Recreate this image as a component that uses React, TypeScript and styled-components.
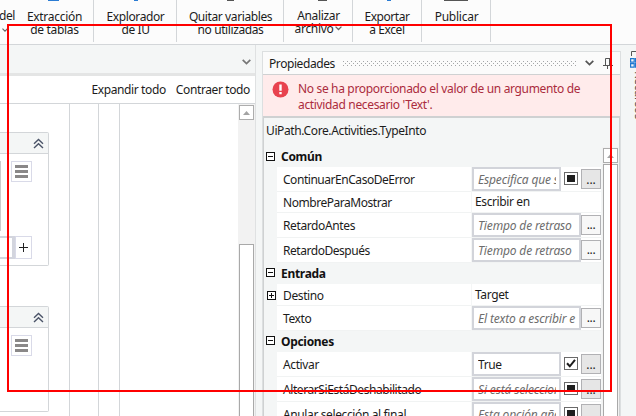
import React from 'react';
import styled, { createGlobalStyle, css } from 'styled-components';

const line = '#d3d6d9';

const GlobalStyle = createGlobalStyle`
  *, *::before, *::after { box-sizing: border-box; }
  html, body { margin: 0; height: 100%; overflow: hidden; }
  body {
    font: 12px/16px "Noto Sans", "Open Sans", sans-serif;
    letter-spacing: -0.38px;
    color: #1c1c1c;
    background: #f4f6f6;
  }
`;

const Window = styled.div`
  position: relative;
  display: flex;
  flex-direction: column;
  width: 636px;
  height: 416px;
  overflow: hidden;
  background: #f4f6f6;
`;

/* Ribbon */
const Ribbon = styled.header`
  display: flex;
  flex: none;
  height: 45px;
  background: #fcfcfc;
  border-bottom: 1px solid ${line};
`;

const RibbonGroup = styled.div<{ $width: number }>`
  display: flex;
  flex: none;
  justify-content: center;
  width: ${p => p.$width}px;
  height: 42px;
  border-right: 1px solid ${line};
  overflow: hidden;
`;

const RibbonButton = styled.div<{ $raise?: number; $shift?: number; $track?: number }>`
  display: flex;
  flex-direction: column;
  align-items: center;
  flex: none;
  padding-left: ${p => p.$shift ?? 0}px;
  line-height: 13px;
  white-space: nowrap;
  letter-spacing: ${p => p.$track ?? -0.35}px;

  > svg { flex: none; display: block; margin-bottom: ${p => 8 - (p.$raise ?? 0)}px; }
`;

const RibbonLine = styled.span`
  display: flex;
  align-items: center;
  gap: 2px;
  height: 13px;
`;

const CutButton = styled.div`
  display: flex;
  flex-direction: column;
  flex: none;
  align-items: flex-end;
  width: 15px;
  margin-right: auto;
  padding-top: 9px;
  line-height: 13px;

  svg { margin: 6px 7px 0 0; }
`;

const Main = styled.div`
  display: flex;
  flex: 1;
  min-height: 0;
`;

/* Workflow designer */
const Designer = styled.section`
  display: flex;
  flex-direction: column;
  flex: none;
  width: 256px;
  border-right: 1px solid #dfe1e2;
`;

const TabStrip = styled.div`
  display: flex;
  flex: none;
  align-items: center;
  justify-content: flex-end;
  height: 31px;
  padding: 6px 4px 0 0;
  border-bottom: 3px solid #e4e5e5;
`;

const DesignerBar = styled.div`
  display: flex;
  flex: none;
  align-items: center;
  justify-content: flex-end;
  gap: 10px;
  height: 28px;
  padding: 0 5px 0 0;
  background: #fff;
  border-bottom: 1px solid ${line};
`;

const Canvas = styled.div`
  display: flex;
  flex: 1;
  min-height: 0;
  background: #fff;
`;

const Cards = styled.div`
  display: flex;
  flex-direction: column;
  flex: none;
  gap: 40px;
  width: 70px;
  padding-top: 28px;
  border-right: 1px solid ${line};
`;

const Lane = styled.div<{ $width: number }>`
  flex: none;
  width: ${p => p.$width}px;
  border-right: 1px solid ${line};
`;

const Card = styled.article<{ $height: number }>`
  display: flex;
  flex-direction: column;
  flex: none;
  width: 49px;
  height: ${p => p.$height}px;
  border: solid ${line};
  border-width: 1px 1px 1px 0;
  border-radius: 0 2px 2px 0;
`;

const CardHeader = styled.div`
  display: flex;
  flex: none;
  align-items: center;
  justify-content: flex-end;
  height: 21px;
  padding-right: 4px;
  background: #f4f6f6;
  border-bottom: 1px solid ${line};
`;

const CardBody = styled.div`
  display: flex;
  flex: none;
  height: 70px;
  margin-top: 7px;
`;

const Preview = styled.div`
  width: 11px;
  border-left: 1px solid #c9cbcd;
`;

const Spacer = styled.div`
  width: 11px;
`;

const SquareButton = styled.div<{ $w: number; $h: number }>`
  display: flex;
  flex: none;
  align-items: center;
  justify-content: center;
  width: ${p => p.$w}px;
  height: ${p => p.$h}px;
  border: 1px solid #d9dae8;
  background: #fff;
`;

const ArgumentRow = styled.div`
  display: flex;
  flex: none;
  height: 23px;
  margin-top: 5px;
`;

const ArgumentInput = styled.div`
  width: 15px;
  border: solid #d3d5de;
  border-width: 2px 3px 2px 0;
  background: #fff;
`;

/* Scroll bars */
const ScrollTrack = styled.div`
  display: flex;
  flex-direction: column;
  flex: none;
  align-items: center;
  width: 17px;
  margin-left: auto;
  background: #f2f2f2;
`;

const ScrollButton = styled.div`
  display: flex;
  flex: none;
  align-items: center;
  justify-content: center;
  width: 15px;
  height: 15px;
  margin-top: 1px;
  border: 1px solid #adadad;
  background: #fff;
`;

const ScrollThumb = styled.div<{ $gap: number }>`
  flex: 1;
  width: 15px;
  margin-top: ${p => p.$gap}px;
  border: 1px solid #a9a9a9;
  border-bottom: 0;
  background: #fff;
`;

/* Properties panel */
const Panel = styled.section`
  display: flex;
  flex-direction: column;
  flex: none;
  width: 359px;
  margin: 6px 0 0 6px;
  border: solid #dcdfe0;
  border-width: 1px 1px 0 1px;
`;

const PanelTitle = styled.div`
  display: flex;
  flex: none;
  align-items: center;
  height: 23px;
  padding: 1px 0 0 6px;
  background: #fbfbfb;
  border-bottom: 1px solid #cfd1d2;
`;

const PanelName = styled.span`
  width: 66px;
  letter-spacing: -0.42px;
`;

const Grip = styled.div`
  display: flex;
  flex: none;
  width: 234px;
  margin-left: 8px;
`;

const Pin = styled.div<{ $gap: number }>`
  display: flex;
  flex: none;
  margin-left: ${p => p.$gap}px;
`;

const ErrorBar = styled.div`
  display: flex;
  flex: none;
  gap: 9px;
  height: 41px;
  padding: 6px 0 0 9px;
  background: #ffebeb;
  color: #ab2b3d;
  white-space: nowrap;
`;

const ErrorText = styled.div`
  letter-spacing: -0.34px;
`;

const PanelBody = styled.div`
  display: flex;
  flex-direction: column;
  flex: 1;
  min-height: 0;
  border: solid #cfd1d2;
  border-width: 2px 1px 0 1px;
  background: #f4f6f6;
`;

const TypeName = styled.div`
  flex: none;
  height: 29px;
  padding: 5px 0 0 2px;
  letter-spacing: -0.38px;
`;

const GridArea = styled.div`
  display: flex;
  flex: 1;
  min-height: 0;
`;

const Rows = styled.div`
  flex: none;
  width: 337px;
`;

const Category = styled.div<{ $h: number }>`
  display: flex;
  align-items: center;
  gap: 6px;
  height: ${p => p.$h}px;
  padding-left: 2px;
  font-weight: 700;
  color: #111;
  letter-spacing: -0.3px;

  > svg { margin-top: -2px; }
`;

const Row = styled.div<{ $h: number }>`
  display: flex;
  height: ${p => p.$h}px;
`;

const Expander = styled.div`
  display: flex;
  flex: none;
  align-items: center;
  width: 13px;
  padding-left: 3px;
`;

const NameCell = styled.div<{ $track?: number }>`
  display: flex;
  align-items: center;
  flex: none;
  width: 194px;
  padding: 2px 0 0 6px;
  background: #fff;
  border-bottom: 1px solid #f1f3f3;
  letter-spacing: ${p => p.$track ?? -0.38}px;
`;

const ValueCell = styled.div<{ $plain?: boolean }>`
  display: flex;
  align-items: center;
  flex: none;
  width: 129px;
  margin-left: 1px;
  background: #fff;
  border-bottom: 1px solid #f1f3f3;
  ${p => p.$plain && css`padding: 0 0 0 3px;`}
`;

const Field = styled.div<{ $hint?: boolean; $narrow?: boolean }>`
  flex: none;
  align-self: flex-start;
  width: ${p => (p.$narrow ? 89 : 109)}px;
  height: 24px;
  padding: 3px 3px 0 4px;
  border: 2px solid #d2d4da;
  background: #fff;
  overflow: hidden;
  white-space: nowrap;
  ${p => p.$hint && css`
    color: #6d6d6d;
    font-style: italic;
    letter-spacing: -0.15px;
  `}
`;

const FieldText = styled.div`
  overflow: hidden;
`;

const Check = styled.div`
  display: flex;
  flex: none;
  margin: -1px 3px 0;
`;

const MoreButton = styled.div<{ $grey?: boolean }>`
  flex: none;
  align-self: flex-start;
  width: 20px;
  height: 20px;
  margin-top: 2px;
  border: 1px solid #b1b1b4;
  background: ${p => (p.$grey ? '#e6e6e6' : '#f7f7f7')};
  line-height: ${p => (p.$grey ? 19 : 17)}px;
  letter-spacing: ${p => (p.$grey ? 0 : -0.4)}px;
  text-align: center;
`;

/* Docked side tab */
const SideTab = styled.aside`
  display: flex;
  flex-direction: column;
  flex: none;
  width: 30px;
  margin-left: 9px;
  padding-top: 6px;
  color: #4a4a4a;

  > svg { flex: none; display: block; }
`;

const SideTabText = styled.span`
  writing-mode: vertical-rl;
  width: 16px;
  margin: 3px 0 0 1px;
`;

const Highlight = styled.div`
  position: absolute;
  left: 7px;
  top: 24px;
  width: 605px;
  height: 368px;
  border: 2px solid #ff0000;
  pointer-events: none;
`;

const Chevron = ({ size = 9, color = '#666' }: { size?: number; color?: string }) => (
  <svg width={size} height={size * 0.67} viewBox="0 0 9 6" fill="none" stroke={color} strokeWidth="1.7">
    <path d="M.7 .8l3.8 3.8L8.3 .8" />
  </svg>
);

const DoubleUp = () => (
  <svg width="11" height="11" viewBox="0 0 11 11" fill="none" stroke="#4b5468" strokeWidth="1.4">
    <path d="M1 5.7L5.5 1.4 10 5.7M1 10L5.5 5.7 10 10" />
  </svg>
);

const Bars = () => (
  <svg width="13" height="13" viewBox="0 0 13 13" fill="#8a8888">
    <path d="M0 0h13v3H0zM0 5h13v3H0zM0 10h13v3H0z" />
  </svg>
);

const Toggle = ({ plus = false }: { plus?: boolean }) => (
  <svg width="9" height="9" viewBox="0 0 9 9" fill="none" stroke="#111">
    <rect x=".5" y=".5" width="8" height="8" fill="#fff" />
    <path d={plus ? 'M2 4.5h5M4.5 2v5' : 'M2 4.5h5'} />
  </svg>
);

const CheckBox = ({ checked }: { checked?: boolean }) => (
  <svg width="14" height="13" viewBox="0 0 14 13" fill="none">
    <rect x=".5" y=".5" width="13" height="12" fill="#fff" stroke="#6a6a6a" />
    {checked
      ? <path d="M3 6.3l2.8 3L11 2.8" stroke="#1c1c1c" strokeWidth="2" />
      : <rect x="3" y="3" width="8" height="7" fill="#1f1f1f" />}
  </svg>
);

const UpArrow = () => (
  <svg width="7" height="4" viewBox="0 0 7 4" fill="#a3a3a3"><path d="M0 4L3.5 0 7 4z" /></svg>
);

const IconEdge = ({ d, color }: { d: string; color: string }) => (
  <svg width="24" height="2" viewBox="0 0 24 2" fill={color}><path d={d} /></svg>
);

type Prop = {
  name: string;
  value: string;
  h: number;
  track?: number;
  plain?: boolean;
  hint?: boolean;
  check?: 'on' | 'mixed';
  plus?: boolean;
};

const groups: { title: string; h: number; rows: Prop[] }[] = [
  {
    title: 'Común', h: 20, rows: [
      { name: 'ContinuarEnCasoDeError', value: 'Especifica que se', h: 25, hint: true, check: 'mixed', track: -0.46 },
      { name: 'NombreParaMostrar', value: 'Escribir en', h: 21, plain: true, track: -0.46 },
      { name: 'RetardoAntes', value: 'Tiempo de retraso', h: 25, hint: true },
      { name: 'RetardoDespués', value: 'Tiempo de retraso', h: 25, hint: true, track: -0.46 },
    ],
  },
  {
    title: 'Entrada', h: 21, rows: [
      { name: 'Destino', value: 'Target', h: 22, plain: true, plus: true },
      { name: 'Texto', value: 'El texto a escribir e', h: 25, hint: true },
    ],
  },
  {
    title: 'Opciones', h: 21, rows: [
      { name: 'Activar', value: 'True', h: 25, check: 'on' },
      { name: 'AlterarSiEstáDeshabilitado', value: 'Si está selecciona', h: 25, hint: true, check: 'mixed', track: -0.42 },
      { name: 'Anular selección al final', value: 'Esta opción aña', h: 25, hint: true, check: 'mixed' },
    ],
  },
];

const PropertyRow = ({ p }: { p: Prop }) => (
  <Row $h={p.h}>
    <Expander>{p.plus && <Toggle plus />}</Expander>
    <NameCell $track={p.track}>{p.name}</NameCell>
    <ValueCell $plain={p.plain}>
      {p.plain ? p.value : (
        <>
          <Field $hint={p.hint} $narrow={!!p.check}><FieldText>{p.value}</FieldText></Field>
          {p.check && <Check><CheckBox checked={p.check === 'on'} /></Check>}
          <MoreButton $grey={!!p.check}>...</MoreButton>
        </>
      )}
    </ValueCell>
  </Row>
);

export default function App() {
  return (
    <>
      <GlobalStyle />
      <Window>
        <Ribbon>
          <RibbonGroup $width={94}>
            <CutButton>
              <span>del</span>
              <Chevron size={6} />
            </CutButton>
            <RibbonButton $track={-0.3}>
              <IconEdge d="M6 0h11v1H6z" color="#2b7cd3" />
              <RibbonLine>Extracción</RibbonLine>
              <RibbonLine>de tablas</RibbonLine>
            </RibbonButton>
            <Spacer />
          </RibbonGroup>
          <RibbonGroup $width={83}>
            <RibbonButton $track={-0.4} $shift={1}>
              <IconEdge d="M10 0h4v1h-4z" color="#2b7cd3" />
              <RibbonLine>Explorador</RibbonLine>
              <RibbonLine>de IU</RibbonLine>
            </RibbonButton>
          </RibbonGroup>
          <RibbonGroup $width={107}>
            <RibbonButton $track={-0.4} $shift={1}>
              <IconEdge d="M9 0h7v1H9z" color="#555" />
              <RibbonLine>Quitar variables</RibbonLine>
              <RibbonLine>no utilizadas</RibbonLine>
            </RibbonButton>
          </RibbonGroup>
          <RibbonGroup $width={69}>
            <RibbonButton $raise={1} $track={-0.33} $shift={1}>
              <IconEdge d="M11 0h9v1h-9z" color="#555" />
              <RibbonLine>Analizar</RibbonLine>
              <RibbonLine>archivo<Chevron size={7} /></RibbonLine>
            </RibbonButton>
          </RibbonGroup>
          <RibbonGroup $width={69}>
            <RibbonButton $track={-0.43}>
              <IconEdge d="M12 0h4v1h-4z" color="#2b7cd3" />
              <RibbonLine>Exportar</RibbonLine>
              <RibbonLine>a Excel</RibbonLine>
            </RibbonButton>
          </RibbonGroup>
          <RibbonGroup $width={69}>
            <RibbonButton $track={-0.25} $shift={1}>
              <IconEdge d="M0 0h24v1H0z" color="#555" />
              <RibbonLine>Publicar</RibbonLine>
            </RibbonButton>
          </RibbonGroup>
        </Ribbon>

        <Main>
          <Designer>
            <TabStrip><Chevron size={9} color="#777" /></TabStrip>
            <DesignerBar>
              <span>Expandir todo</span>
              <span>Contraer todo</span>
            </DesignerBar>
            <Canvas>
              <Cards>
                <Card $height={134}>
                  <CardHeader><DoubleUp /></CardHeader>
                  <CardBody>
                    <Preview />
                    <SquareButton $w={21} $h={21}><Bars /></SquareButton>
                  </CardBody>
                  <ArgumentRow>
                    <ArgumentInput />
                    <SquareButton $w={17} $h={23}>
                      <svg width="9" height="9" viewBox="0 0 9 9" stroke="#222"><path d="M0 4.5h9M4.5 0v9" /></svg>
                    </SquareButton>
                  </ArgumentRow>
                </Card>
                <Card $height={106}>
                  <CardHeader><DoubleUp /></CardHeader>
                  <CardBody>
                    <Spacer />
                    <SquareButton $w={21} $h={21}><Bars /></SquareButton>
                  </CardBody>
                </Card>
              </Cards>
              <Lane $width={29} />
              <Lane $width={21} />
              <ScrollTrack>
                <ScrollButton><UpArrow /></ScrollButton>
                <ScrollThumb $gap={124} />
              </ScrollTrack>
            </Canvas>
          </Designer>

          <Panel>
            <PanelTitle>
              <PanelName>Propiedades</PanelName>
              <Grip>
                <svg width="234" height="5">
                  <defs>
                    <pattern id="dots" width="4" height="4" patternUnits="userSpaceOnUse">
                      <path d="M0 0h1v1H0zM2 2h1v1H2z" fill="#a4a6a8" />
                    </pattern>
                  </defs>
                  <rect width="234" height="5" fill="url(#dots)" />
                </svg>
              </Grip>
              <Pin $gap={8}><Chevron size={9} color="#555" /></Pin>
              <Pin $gap={9}>
                <svg width="10" height="11" viewBox="0 0 10 11" fill="none" stroke="#555">
                  <path d="M2.5 7V.5h5V7M6.5 1v6M0 7.5h10M4.5 8v3" />
                </svg>
              </Pin>
            </PanelTitle>
            <ErrorBar>
              <svg width="17" height="17" viewBox="0 0 17 17">
                <circle cx="8.5" cy="8.5" r="8" fill="#e8434f" />
                <path d="M7.3 3.5h2.4v6.2H7.3zM7.3 11h2.4v2.2H7.3z" fill="#fff" />
              </svg>
              <ErrorText>
                No se ha proporcionado el valor de un argumento de<br />
                actividad necesario 'Text'.
              </ErrorText>
            </ErrorBar>
            <PanelBody>
              <TypeName>UiPath.Core.Activities.TypeInto</TypeName>
              <GridArea>
                <Rows>
                  {groups.map(g => (
                    <React.Fragment key={g.title}>
                      <Category $h={g.h}><Toggle />{g.title}</Category>
                      {g.rows.map(p => <PropertyRow key={p.name} p={p} />)}
                    </React.Fragment>
                  ))}
                </Rows>
                <ScrollTrack>
                  <ScrollButton><UpArrow /></ScrollButton>
                  <ScrollThumb $gap={1} />
                </ScrollTrack>
              </GridArea>
            </PanelBody>
          </Panel>

          <SideTab>
            <svg width="20" height="17" viewBox="0 0 20 17" fill="none">
              <path d="M1.5 5V.5H20" stroke="#555" />
              <path d="M.6 7.6h3.6v3.6H.6zM.6 12.6h3.6v3.6H.6zM5.6 7.6h3.6v3.6H5.6zM5.6 12.6h3.6v3.6H5.6z" stroke="#1f77d0" strokeWidth="1.2" />
            </svg>
            <SideTabText>Recursos</SideTabText>
          </SideTab>
        </Main>
        <Highlight />
      </Window>
    </>
  );
}
